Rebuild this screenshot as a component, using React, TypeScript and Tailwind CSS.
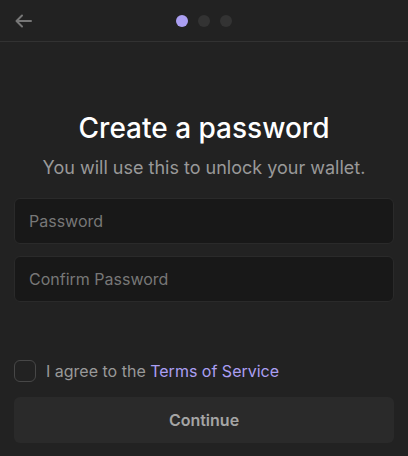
import { useState } from "react";

export default function App() {
  const [pw, setPw] = useState("");
  const [confirm, setConfirm] = useState("");
  const [agreed, setAgreed] = useState(false);

  return (
    <div
      className="w-[408px] h-[456px] bg-[#222222] flex flex-col overflow-hidden"
      style={{ fontFamily: "Inter, 'Noto Sans', sans-serif" }}
    >
      <header className="h-[42px] shrink-0 flex items-center px-[14px] border-b border-[#323232] relative">
        <button className="text-[#777777] w-[18px] h-[18px] flex items-center justify-center">
          <svg width="17" height="14" viewBox="0 0 17 14" fill="none" stroke="currentColor" strokeWidth="2" strokeLinecap="round" strokeLinejoin="round">
            <path d="M16 7H2" />
            <path d="M7 1.5 1.5 7 7 12.5" />
          </svg>
        </button>
        <div className="flex-1 flex justify-center gap-[10px] pr-[18px]">
          <span className="w-3 h-3 rounded-full bg-[#ab9ff2]" />
          <span className="w-3 h-3 rounded-full bg-[#333333]" />
          <span className="w-3 h-3 rounded-full bg-[#333333]" />
        </div>
      </header>

      <main className="flex-1 flex flex-col px-[14px] pt-[69px] pb-[13px]">
        <h1 className="text-[28px] leading-[34px] font-medium text-white text-center">
          Create a password
        </h1>
        <p className="mt-[11px] text-[18px] leading-[24px] text-[#999999] text-center">
          You will use this to unlock your wallet.
        </p>

        <div className="mt-[18px] flex flex-col gap-[12px]">
          <input
            type="password"
            value={pw}
            onChange={(e) => setPw(e.target.value)}
            placeholder="Password"
            className="h-[46px] w-full rounded-[6px] bg-[#181818] border border-[#2a2a2a] px-[14px] text-[16px] text-white placeholder:text-[#777777] outline-none"
          />
          <input
            type="password"
            value={confirm}
            onChange={(e) => setConfirm(e.target.value)}
            placeholder="Confirm Password"
            className="h-[46px] w-full rounded-[6px] bg-[#181818] border border-[#2a2a2a] px-[14px] text-[16px] text-white placeholder:text-[#777777] outline-none"
          />
        </div>

        <div className="mt-auto flex items-center gap-[10px]">
          <button
            onClick={() => setAgreed(!agreed)}
            className="w-[22px] h-[22px] rounded-[6px] border border-[#474747] bg-[#222222] shrink-0"
          />
          <span className="text-[16px] text-[#999999]">
            I agree to the <span className="text-[#ab9ff2]">Terms of Service</span>
          </span>
        </div>

        <button className="mt-[14px] h-[46px] w-full rounded-[6px] bg-[#2a2a2a] text-[16px] font-semibold text-[#a5a5a5]">
          Continue
        </button>
      </main>
    </div>
  );
}
